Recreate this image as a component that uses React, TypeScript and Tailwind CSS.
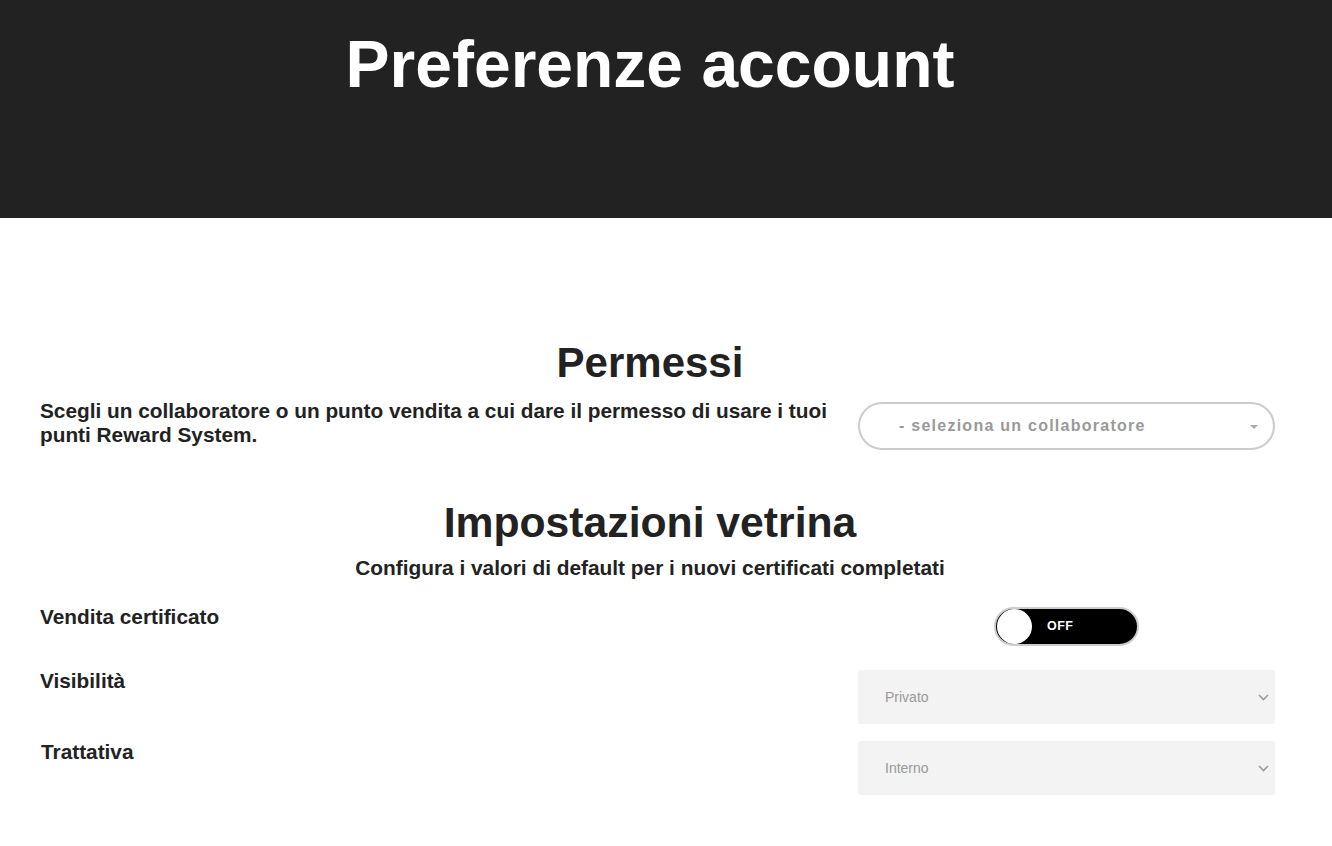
import React from "react";

const font = { fontFamily: '"Liberation Sans", Arial, Helvetica, sans-serif' };

function Chevron() {
  return (
    <svg width="11" height="7" viewBox="0 0 11 7" fill="none">
      <path d="M1 1l4.5 4.5L10 1" stroke="#9a9a9a" strokeWidth="1.6" />
    </svg>
  );
}

function GraySelect({ value }: { value: string }) {
  return (
    <div className="flex h-[54px] w-[417px] items-center justify-between rounded-[3px] bg-[#f3f3f3] pl-[27px] pr-[6px]">
      <span className="text-[14px] text-[#999]">{value}</span>
      <Chevron />
    </div>
  );
}

export default function App() {
  return (
    <div className="min-h-[846px] w-full bg-white text-[#222]" style={font}>
      <header className="h-[218px] w-full bg-[#222222]">
        <div className="w-[1300px] pt-[27px] text-center">
          <h1 className="text-[66px] font-bold leading-[1.15] text-white">Preferenze account</h1>
        </div>
      </header>

      <main className="w-[1300px]">
        <h2 className="mt-[121px] text-center text-[42px] font-bold leading-[48px]">Permessi</h2>

        <div className="mt-[15px] flex items-start justify-between pl-[40px] pr-[25px]">
          <p className="mt-[-3px] w-[810px] text-[20.8px] font-bold leading-[24px]">
            Scegli un collaboratore o un punto vendita a cui dare il permesso di usare i tuoi punti Reward System.
          </p>
          <div className="relative flex h-[48px] w-[417px] items-center rounded-full border-2 border-[#cccccc] pl-[39px]">
            <span className="text-[16px] font-bold tracking-[1.25px] text-[#999]">- seleziona un collaboratore</span>
            <span className="absolute right-[15px] top-[21px] h-0 w-0 border-x-[4px] border-t-[4px] border-x-transparent border-t-[#aaaaaa]" />
          </div>
        </div>

        <h2 className="mt-[48px] text-center text-[42.7px] font-bold leading-[48px]">Impostazioni vetrina</h2>
        <p className="mt-[10px] text-center text-[20.85px] font-bold leading-[24px]">
          Configura i valori di default per i nuovi certificati completati
        </p>

        <div className="mt-[27px] flex items-start justify-between pl-[40px] pr-[25px]">
          <span className="mt-[-2px] text-[20.8px] font-bold leading-[24px]">Vendita certificato</span>
          <div className="flex w-[417px] justify-center">
            <div className="flex h-[39px] w-[145px] items-center rounded-full border-2 border-[#cccccc] bg-black pl-[1px]">
              <span className="h-[35px] w-[35px] rounded-full bg-white" />
              <span className="ml-[15px] text-[12.5px] font-bold tracking-[0.5px] text-white">OFF</span>
            </div>
          </div>
        </div>

        <div className="mt-[24px] flex items-start justify-between pl-[40px] pr-[25px]">
          <span className="mt-[-1px] text-[20.8px] font-bold leading-[24px]">Visibilità</span>
          <GraySelect value="Privato" />
        </div>

        <div className="mt-[17px] flex items-start justify-between pl-[41px] pr-[25px]">
          <span className="mt-[-1px] text-[20.8px] font-bold leading-[24px]">Trattativa</span>
          <GraySelect value="Interno" />
        </div>
      </main>
    </div>
  );
}
